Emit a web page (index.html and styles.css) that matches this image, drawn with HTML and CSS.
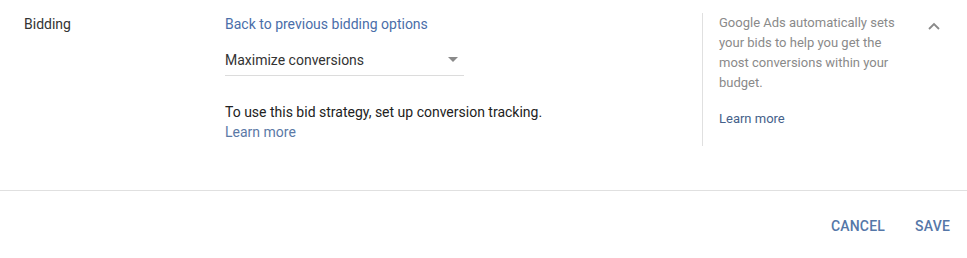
FILE: index.html
```html
<!DOCTYPE html>
<html>
<head>
<meta charset="utf-8">
<link rel="stylesheet" href="styles.css">
</head>
<body>
<div class="panel">
  <section class="row">
    <div class="label">Bidding</div>
    <div class="content">
      <a class="link back">Back to previous bidding options</a>
      <div class="select">
        <span>Maximize conversions</span>
        <span class="caret"></span>
      </div>
      <p class="note">To use this bid strategy, set up conversion tracking.<br><a class="link">Learn more</a></p>
    </div>
    <aside class="help">
      <p>Google Ads automatically sets your bids to help you get the most conversions within your budget.</p>
      <a class="link help-link">Learn more</a>
    </aside>
    <div class="toggle">
      <svg width="14" height="10" viewBox="0 0 14 10"><path d="M2 8 L7 3 L12 8" fill="none" stroke="#8a8a8a" stroke-width="1.8"/></svg>
    </div>
  </section>
  <footer class="actions">
    <button class="btn">CANCEL</button>
    <button class="btn">SAVE</button>
  </footer>
</div>
</body>
</html>
```
FILE: styles.css
```css
* { box-sizing: border-box; }
body {
  margin: 0;
  background: #fff;
  font-family: Roboto, "Noto Sans", Arial, sans-serif;
  color: #212121;
  font-size: 14px;
}
.panel { width: 967px; }
.row {
  display: flex;
  height: 191px;
  border-bottom: 1px solid #e0e0e0;
  padding-top: 14px;
}
.label {
  width: 225px;
  padding-left: 24px;
  line-height: 20px;
  color: #333;
}
.content {
  width: 477px;
  display: flex;
  flex-direction: column;
  align-items: flex-start;
}
.link {
  color: #4a6ea9;
  text-decoration: none;
  cursor: pointer;
}
.back { line-height: 20px; }
.select {
  margin-top: 10px;
  width: 239px;
  height: 32px;
  border-bottom: 1px solid #dcdcdc;
  display: flex;
  align-items: center;
  justify-content: space-between;
  padding-right: 6px;
  padding-bottom: 0;
  color: #333;
}
.caret {
  width: 0;
  height: 0;
  border-left: 5px solid transparent;
  border-right: 5px solid transparent;
  border-top: 5px solid #8a8a8a;
}
.note {
  margin: 26px 0 0;
  line-height: 20px;
  color: #222;
}
.note .link { color: #5b79a6; }
.help {
  width: 202px;
  margin-top: -1px;
  margin-bottom: 44px;
  border-left: 1px solid #e0e0e0;
  padding-left: 16px;
  padding-right: 0;
  font-size: 13px;
  color: #8a8a8a;
}
.help p {
  margin: 0;
  width: 185px;
  line-height: 20px;
}
.help-link {
  display: block;
  margin-top: 16px;
  line-height: 20px;
  color: #45618a;
}
.toggle {
  padding-left: 23px;
  padding-top: 4px;
}
.actions {
  display: flex;
  justify-content: flex-end;
  gap: 14px;
  padding: 22px 9px 0 0;
}
.btn {
  background: none;
  border: none;
  font-family: Roboto, "Noto Sans", Arial, sans-serif;
  font-size: 14px;
  font-weight: 500;
  color: #5577a8;
  padding: 0 8px;
  height: 26px;
  letter-spacing: 0.2px;
}
```
